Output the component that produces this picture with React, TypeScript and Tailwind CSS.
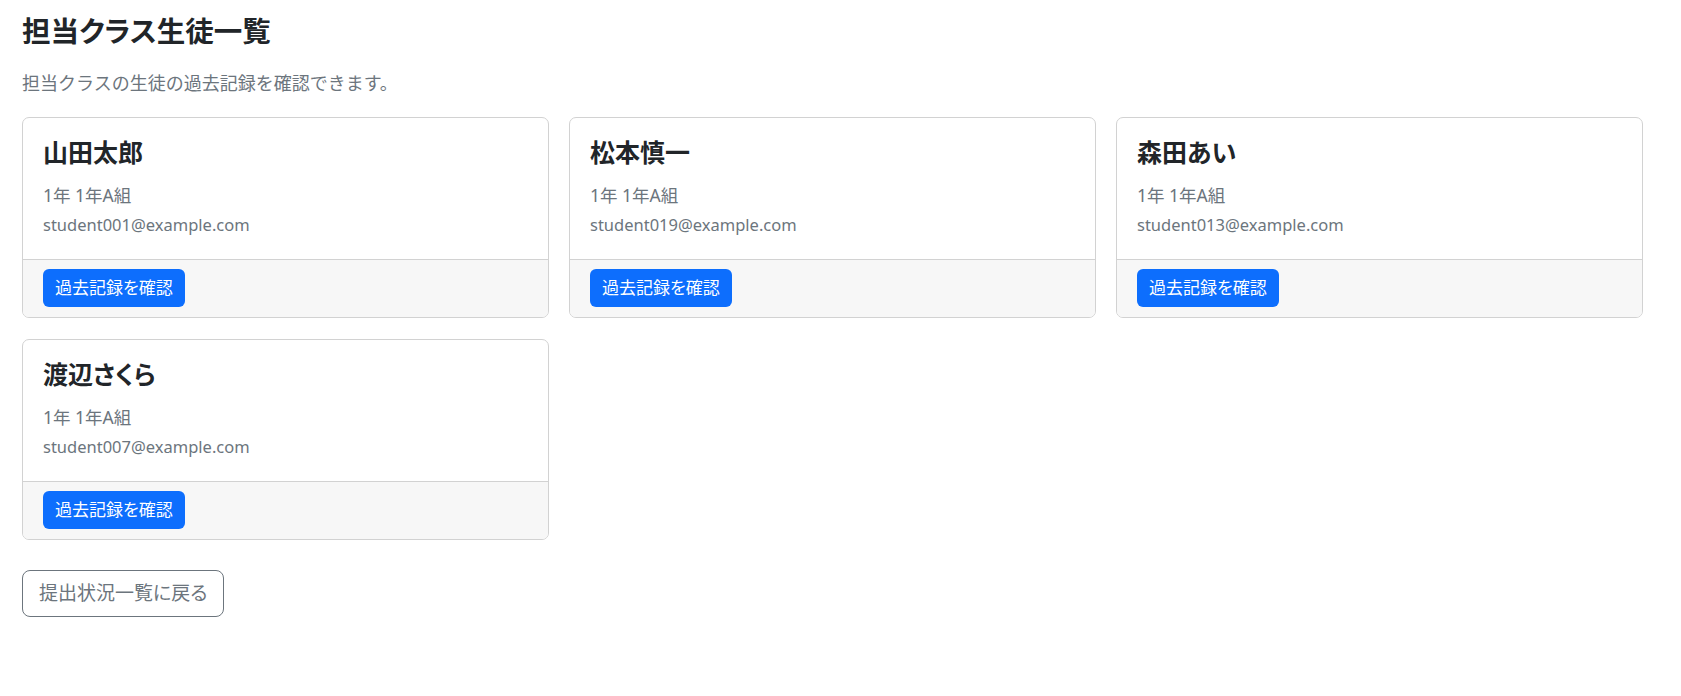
import React from "react";

type Student = { name: string; grade: string; email: string };

const students: Student[] = [
  { name: "山田太郎", grade: "1年 1年A組", email: "student001@example.com" },
  { name: "松本慎一", grade: "1年 1年A組", email: "student019@example.com" },
  { name: "森田あい", grade: "1年 1年A組", email: "student013@example.com" },
  { name: "渡辺さくら", grade: "1年 1年A組", email: "student007@example.com" },
];

function StudentCard({ s }: { s: Student }) {
  return (
    <div className="flex flex-col rounded-[7px] border border-[#d2d2d2] bg-white overflow-hidden">
      <div className="px-[20px] pt-[20px] pb-[21px]">
        <h4 className="text-[25px] leading-[29px] font-bold text-[#212529] mb-[15px] [font-feature-settings:'palt']">
          {s.name}
        </h4>
        <p className="text-[17.5px] leading-[26px] text-[#6c757d] mb-[4px]">{s.grade}</p>
        <p className="text-[16.5px] leading-[26px] text-[#6c757d]">{s.email}</p>
      </div>
      <div className="border-t border-[#d2d2d2] bg-[#f7f7f7] px-[20px] pt-[9px] pb-[10px]">
        <button className="h-[38px] rounded-[6px] bg-[#0d6efd] px-[12px] text-[17px] leading-[24px] text-white [font-feature-settings:'palt']">
          過去記録を確認
        </button>
      </div>
    </div>
  );
}

export default function App() {
  return (
    <div
      className="min-h-screen bg-white"
      style={{ fontFamily: '"Noto Sans", "Noto Sans CJK JP", sans-serif' }}
    >
      <div className="ml-[22px] w-[1621px] pt-[14px]">
        <h1 className="text-[28.5px] leading-[34px] font-bold text-[#212529] [font-feature-settings:'palt']">
          担当クラス生徒一覧
        </h1>
        <p className="mt-[22px] text-[18px] leading-[26px] text-[#6c757d]">
          担当クラスの生徒の過去記録を確認できます。
        </p>
        <div className="mt-[21px] grid grid-cols-3 gap-x-[20px] gap-y-[21px]">
          {students.map((s) => (
            <StudentCard key={s.email} s={s} />
          ))}
        </div>
        <button className="mt-[30px] h-[47px] rounded-[8px] border border-[#6c757d] px-[16px] text-[19px] leading-[27px] text-[#6c757d] bg-white [font-feature-settings:'palt']">
          提出状況一覧に戻る
        </button>
      </div>
    </div>
  );
}
